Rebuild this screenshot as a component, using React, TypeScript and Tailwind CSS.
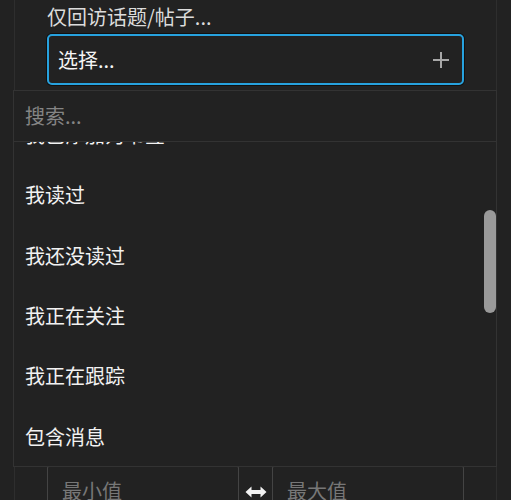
import React from "react";

const items = ["我已添加为书签", "我读过", "我还没读过", "我正在关注", "我正在跟踪", "包含消息"];

export default function App() {
  return (
    <div
      className="relative w-[511px] h-[500px] overflow-hidden bg-[#222222]"
      style={{ fontFamily: '"Noto Sans CJK SC", "Noto Sans", sans-serif' }}
    >
      <div className="mx-[14px] h-full border-x border-[#2e2e2e] pl-[32px] pr-[32px]">
        <div className="h-[34px] flex items-center text-[20px] leading-[28px] text-[#dcdcdc]">
          仅回访话题/帖子...
        </div>
        <div className="relative">
          <div className="h-[51px] border-2 border-[#27a2df] rounded-[5px] flex items-center justify-between pl-[9px] pr-[12px] shadow-[0_0_0_1px_#111]">
            <span className="text-[20px] leading-[28px] text-[#f5f5f5]">选择...</span>
            <svg width="18" height="18" viewBox="0 0 18 18" className="text-[#a8a8a8]">
              <path d="M9 1v16M1 9h16" stroke="currentColor" strokeWidth="2" />
            </svg>
          </div>
        </div>
        <div className="mt-[381px] flex items-stretch">
          <div className="w-[192px] h-[50px] border border-[#444] rounded-[2px] flex items-center pl-[14px] text-[20px] text-[#777]">
            最小值
          </div>
          <div className="w-[33px] flex items-center justify-center pt-[2px]">
            <svg width="22" height="14" viewBox="0 0 22 14">
              <path d="M0.5 7L6.5 1.5V5H15.5V1.5L21.5 7L15.5 12.5V9H6.5V12.5Z" fill="#f2f2f2" />
            </svg>
          </div>
          <div className="w-[192px] h-[50px] border border-[#444] rounded-[2px] flex items-center pl-[14px] text-[20px] text-[#777]">
            最大值
          </div>
        </div>
      </div>

      <div className="absolute top-[90px] left-[13px] w-[484px] h-[377px] border border-[#333] bg-[#222222] flex flex-col">
        <div className="h-[51px] shrink-0 border-b border-[#333] flex items-center pl-[11px] text-[20px] text-[#858585]">
          搜索...
        </div>
        <div className="flex-1 overflow-hidden">
          <div className="-mt-[37px]">
            {items.map((t) => (
              <div key={t} className="h-[60.33px] flex items-center pl-[11px] text-[20px] text-[#f2f2f2]">
                {t}
              </div>
            ))}
          </div>
        </div>
        <div className="absolute right-[0px] top-[119px] w-[12px] h-[103px] rounded-full bg-[#9a9a9a]" />
      </div>
    </div>
  );
}
